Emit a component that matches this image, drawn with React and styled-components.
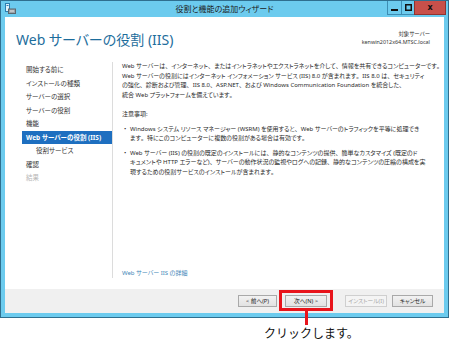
import React from "react";
import styled, { createGlobalStyle } from "styled-components";

const Global = createGlobalStyle`
  html, body { margin: 0; padding: 0; background: #ffffff; }
  body {
    font-family: "Noto Sans", "Noto Sans CJK JP", sans-serif;
    font-feature-settings: "palt";
  }
`;

const Page = styled.div`
  width: 450px;
  height: 341px;
  overflow: hidden;
  background: #fff;
`;

const Window = styled.div`
  box-sizing: border-box;
  width: 449px;
  height: 318px;
  border: 1px solid #2f6f8f;
  background: #6ccbee;
  padding: 0 4px 4px 4px;
  display: flex;
  flex-direction: column;
`;

const TitleBar = styled.div`
  height: 16px;
  display: grid;
  grid-template-columns: 1fr auto 1fr;
  align-items: start;
`;

const AppIcon = styled.div`
  padding-top: 2px;
  display: flex;
`;

const TitleText = styled.div`
  font-size: 8px;
  line-height: 16px;
  color: #1c1c1c;
  white-space: nowrap;
`;

const Controls = styled.div`
  display: flex;
  justify-content: flex-end;
  margin-right: -2px;
`;

const CtlButton = styled.div`
  box-sizing: border-box;
  width: ${(p) => p.$w}px;
  height: 14px;
  background: ${(p) => (p.$close ? "#c7504a" : "#6ccbee")};
  border: 1px solid ${(p) => (p.$close ? "#8f3430" : "#3d8db3")};
  border-top: none;
  margin-left: -1px;
  display: flex;
  align-items: center;
  justify-content: center;
  font-family: "DejaVu Sans", sans-serif;
  font-weight: bold;
  font-size: 8px;
  color: #111;
`;

const Client = styled.div`
  flex: 1;
  background: #ffffff;
  display: flex;
  flex-direction: column;
  min-height: 0;
`;

const Header = styled.div`
  height: 45px;
  display: flex;
  justify-content: space-between;
  align-items: flex-start;
  padding: 0 14px 0 11px;
`;

const PageTitle = styled.div`
  font-size: 14px;
  line-height: 18px;
  color: #1d6d9c;
  margin-top: 14px;
  white-space: nowrap;
`;

const ServerInfo = styled.div`
  text-align: right;
  font-size: 5.4px;
  line-height: 8px;
  color: #333;
  margin-top: 13px;
`;

const Body = styled.div`
  flex: 1;
  display: flex;
  min-height: 0;
`;

const Nav = styled.div`
  flex: none;
  width: 108px;
  box-sizing: border-box;
  padding: 1px 0 0 17px;
  margin-bottom: 11px;
  border-right: 1px solid #dcdcdc;
  display: flex;
  flex-direction: column;
`;

const NavItem = styled.div`
  height: 13.5px;
  line-height: 13.5px;
  font-size: 6.5px;
  padding-left: ${(p) => (p.$sub ? 14 : 4)}px;
  white-space: nowrap;
  color: ${(p) => (p.$active ? "#ffffff" : p.$disabled ? "#b8b8b8" : "#333")};
  background: ${(p) => (p.$active ? "#1e6fc0" : "transparent")};
  font-weight: ${(p) => (p.$active ? 700 : 400)};
`;

const Main = styled.div`
  flex: 1;
  min-width: 0;
  padding: 0 0 0 9px;
  display: flex;
  flex-direction: column;
  font-size: 6px;
  line-height: 9.5px;
  color: #2a2a2a;
`;

const Punct = styled.span`
  font-feature-settings: normal;
`;

const Para = styled.div`
  white-space: nowrap;
  margin-top: ${(p) => p.$mt || 0}px;
`;

const BulletRow = styled.div`
  display: flex;
  white-space: nowrap;
  margin-top: ${(p) => p.$mt || 0}px;
`;

const BulletMark = styled.span`
  width: 8px;
  flex: none;
  padding-left: 2px;
  box-sizing: border-box;
`;

const Spacer = styled.div`
  flex: 1;
`;

const MoreLink = styled.div`
  color: #3f87b8;
  margin-bottom: 11px;
  white-space: nowrap;
`;

const Footer = styled.div`
  height: 24px;
  background: #f0f0f0;
  display: flex;
  justify-content: flex-end;
  align-items: center;
  padding-right: 11px;
`;

const Btn = styled.div`
  position: relative;
  box-sizing: border-box;
  width: ${(p) => p.$w || 40}px;
  height: 12px;
  margin-left: ${(p) => p.$ml || 0}px;
  border: 1px solid ${(p) => (p.$disabled ? "#cfcfcf" : "#a9a9a9")};
  background: ${(p) => (p.$disabled ? "#f4f4f4" : "linear-gradient(#f2f2f2, #e2e2e2)")};
  color: ${(p) => (p.$disabled ? "#a8a8a8" : "#222")};
  font-size: 5.7px;
  line-height: 10px;
  text-align: center;
  white-space: nowrap;
`;

const Highlight = styled.div`
  position: absolute;
  left: -7px;
  right: -7px;
  top: -6px;
  bottom: -5px;
  border: 3px solid #e8141b;
  pointer-events: none;
  &::after {
    content: "";
    position: absolute;
    left: 50%;
    margin-left: -1.5px;
    top: 100%;
    width: 3px;
    height: 17px;
    background: #e8141b;
  }
`;

const Caption = styled.div`
  margin-top: 8px;
  padding-left: 264px;
  font-family: "Noto Sans CJK JP", sans-serif;
  font-feature-settings: normal;
  font-size: 12px;
  line-height: 14px;
  color: #111;
  white-space: nowrap;
`;

function jp(s) {
  return s.split(/([、。])/).map((part, i) =>
    part === "、" || part === "。" ? <Punct key={i}>{part}</Punct> : part
  );
}

function Lines({ lines }) {
  return lines.map((l, i) => (
    <React.Fragment key={i}>
      {i > 0 && <br />}
      {jp(l)}
    </React.Fragment>
  ));
}

function ServerIcon() {
  return (
    <svg width="11" height="11" viewBox="0 0 11 11">
      <rect x="0.5" y="0.5" width="4" height="8" fill="#dff2fb" stroke="#2d7fb0" />
      <rect x="1.5" y="2" width="2" height="1" fill="#2d7fb0" />
      <rect x="3.5" y="6" width="7" height="4.5" fill="#9aa4ab" stroke="#5c666d" />
      <rect x="5" y="7.5" width="4" height="1" fill="#e6e6e6" />
    </svg>
  );
}

const intro = [
  "Web サーバーは、インターネット、またはイントラネットやエクストラネットを介して、情報を共有できるコンピューターです。",
  "Web サーバーの役割にはインターネット インフォメーション サービス (IIS) 8.0 が含まれます。IIS 8.0 は、セキュリティ",
  "の強化、診断および管理、IIS 8.0、ASP.NET、および Windows Communication Foundation を統合した、",
  "統合 Web プラットフォームを備えています。",
];

const bullet1 = [
  "Windows システム リソース マネージャー (WSRM) を使用すると、Web サーバーのトラフィックを平等に処理でき",
  "ます。特にこのコンピューターに複数の役割がある場合は有効です。",
];

const bullet2 = [
  "Web サーバー (IIS) の役割の既定のインストールには、静的なコンテンツの提供、簡単なカスタマイズ (既定のド",
  "キュメントや HTTP エラーなど)、サーバーの動作状況の監視やログへの記録、静的なコンテンツの圧縮の構成を実",
  "現するための役割サービスのインストールが含まれます。",
];

export default function App() {
  return (
    <Page>
      <Global />
      <Window>
        <TitleBar>
          <AppIcon>
            <ServerIcon />
          </AppIcon>
          <TitleText>役割と機能の追加ウィザード</TitleText>
          <Controls>
            <CtlButton $w={15}>
              <svg width="7" height="7" viewBox="0 0 7 7">
                <rect x="0" y="5" width="7" height="2" fill="#111" />
              </svg>
            </CtlButton>
            <CtlButton $w={14}>
              <svg width="7" height="7" viewBox="0 0 7 7">
                <rect x="0.75" y="0.75" width="5.5" height="5.5" fill="none" stroke="#111" strokeWidth="1.5" />
              </svg>
            </CtlButton>
            <CtlButton $w={32} $close>
              x
            </CtlButton>
          </Controls>
        </TitleBar>
        <Client>
          <Header>
            <PageTitle>Web サーバーの役割 (IIS)</PageTitle>
            <ServerInfo>
              対象サーバー
              <br />
              kenwin2012x64.MTSC.local
            </ServerInfo>
          </Header>
          <Body>
            <Nav>
              <NavItem>開始する前に</NavItem>
              <NavItem>インストールの種類</NavItem>
              <NavItem>サーバーの選択</NavItem>
              <NavItem>サーバーの役割</NavItem>
              <NavItem>機能</NavItem>
              <NavItem $active>Web サーバーの役割 (IIS)</NavItem>
              <NavItem $sub>役割サービス</NavItem>
              <NavItem>確認</NavItem>
              <NavItem $disabled>結果</NavItem>
            </Nav>
            <Main>
              <Para>
                <Lines lines={intro} />
              </Para>
              <Para $mt={10}>注意事項:</Para>
              <BulletRow $mt={5}>
                <BulletMark>•</BulletMark>
                <span>
                  <Lines lines={bullet1} />
                </span>
              </BulletRow>
              <BulletRow $mt={5}>
                <BulletMark>•</BulletMark>
                <span>
                  <Lines lines={bullet2} />
                </span>
              </BulletRow>
              <Spacer />
              <MoreLink>Web サーバー IIS の詳細</MoreLink>
            </Main>
          </Body>
          <Footer>
            <Btn $w={39}>&lt; 前へ(P)</Btn>
            <Btn $w={42} $ml={8}>
              次へ(N) &gt;
              <Highlight />
            </Btn>
            <Btn $w={42} $ml={18} $disabled>
              インストール(I)
            </Btn>
            <Btn $w={41} $ml={5}>
              キャンセル
            </Btn>
          </Footer>
        </Client>
      </Window>
      <Caption>クリックします。</Caption>
    </Page>
  );
}
